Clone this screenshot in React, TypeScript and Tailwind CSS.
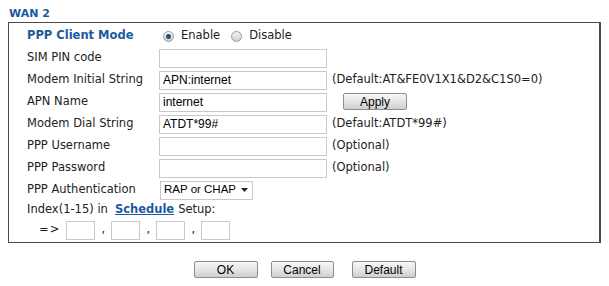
import React from 'react';

const Input = ({ value = '', w = 'w-[168px]' }: { value?: string; w?: string }) => (
  <div
    className={`${w} h-[19px] border border-[#c9c9c9] bg-white px-[3px] flex items-center whitespace-nowrap text-[12px] text-black font-['Liberation_Sans',sans-serif]`}
  >
    {value}
  </div>
);

const Radio = ({ checked }: { checked: boolean }) => (
  <span className="w-[11px] h-[11px] rounded-full border border-[#9a9a9a] bg-gradient-to-b from-[#f4f4f4] to-[#cfcfcf] flex items-center justify-center">
    {checked && <span className="w-[5px] h-[5px] rounded-full bg-[#2f4f6f]" />}
  </span>
);

const Button = ({ label, w }: { label: string; w: string }) => (
  <button
    className={`${w} h-[17px] border border-[#8e8e8e] rounded-[2px] bg-gradient-to-b from-[#f7f7f7] via-[#e6e6e6] to-[#cfcfcf] text-[12px] leading-none text-black font-['Liberation_Sans',sans-serif]`}
  >
    {label}
  </button>
);

const Row = ({ label, children, bold }: { label: string; children?: React.ReactNode; bold?: boolean }) => (
  <div className="flex items-center h-[22px]">
    <div className={`w-[132px] shrink-0 ${bold ? 'font-bold text-[#1b5a9f]' : ''}`}>{label}</div>
    <div className="flex items-center">{children}</div>
  </div>
);

const Note = ({ text }: { text: string }) => <span className="ml-[5px] whitespace-nowrap">{text}</span>;

export default function App() {
  return (
    <div className="w-[609px] h-[286px] bg-white font-['DejaVu_Sans',Verdana,sans-serif] text-[11.5px] text-[#222]">
      <div className="pl-[9px] pt-[6px] h-[22px] text-[11px] font-bold text-[#1b5a9f]">WAN 2</div>

      <div className="ml-[8px] w-[593px] h-[221px] border border-[#4a4a4a] border-r-2 pl-[18px] pt-[2px]">
        <Row label="PPP Client Mode" bold>
          <span className="ml-[4px] flex items-center gap-[7px]">
            <Radio checked />
            <span>Enable</span>
          </span>
          <span className="ml-[11px] flex items-center gap-[7px]">
            <Radio checked={false} />
            <span>Disable</span>
          </span>
        </Row>
        <Row label="SIM PIN code">
          <Input />
        </Row>
        <Row label="Modem Initial String">
          <Input value="APN:internet" />
          <Note text="(Default:AT&FE0V1X1&D2&C1S0=0)" />
        </Row>
        <Row label="APN Name">
          <Input value="internet" />
          <span className="ml-[16px]">
            <Button label="Apply" w="w-[64px]" />
          </span>
        </Row>
        <Row label="Modem Dial String">
          <Input value="ATDT*99#" />
          <Note text="(Default:ATDT*99#)" />
        </Row>
        <Row label="PPP Username">
          <Input />
          <Note text="(Optional)" />
        </Row>
        <Row label="PPP Password">
          <Input />
          <Note text="(Optional)" />
        </Row>
        <Row label="PPP Authentication">
          <div className="ml-[1px] w-[93px] h-[19px] border border-[#c9c9c9] bg-white pl-[3px] pr-[4px] flex items-center justify-between whitespace-nowrap text-[11.5px] text-black font-['Liberation_Sans',sans-serif]">
            <span>RAP or CHAP</span>
            <svg width="7" height="4" viewBox="0 0 7 4" className="shrink-0">
              <path d="M0 0h7L3.5 4z" fill="#222" />
            </svg>
          </div>
        </Row>
        <div className="flex items-center h-[17px]">
          <span>Index(1-15) in</span>
          <a className="ml-[7px] font-bold text-[#1b5a9f] underline">Schedule</a>
          <span className="ml-[4px]">Setup:</span>
        </div>
        <div className="flex items-center h-[24px] pl-[12px]">
          <span className="mr-[6px] tracking-[1px]">=&gt;</span>
          <Input w="w-[29px]" />
          <span className="w-[16px] text-center">,</span>
          <Input w="w-[29px]" />
          <span className="w-[16px] text-center">,</span>
          <Input w="w-[29px]" />
          <span className="w-[16px] text-center">,</span>
          <Input w="w-[29px]" />
        </div>
      </div>

      <div className="flex justify-center gap-[13px] mt-[18px]">
        <Button label="OK" w="w-[64px]" />
        <Button label="Cancel" w="w-[63px]" />
        <span className="ml-[5px]">
          <Button label="Default" w="w-[64px]" />
        </span>
      </div>
    </div>
  );
}
